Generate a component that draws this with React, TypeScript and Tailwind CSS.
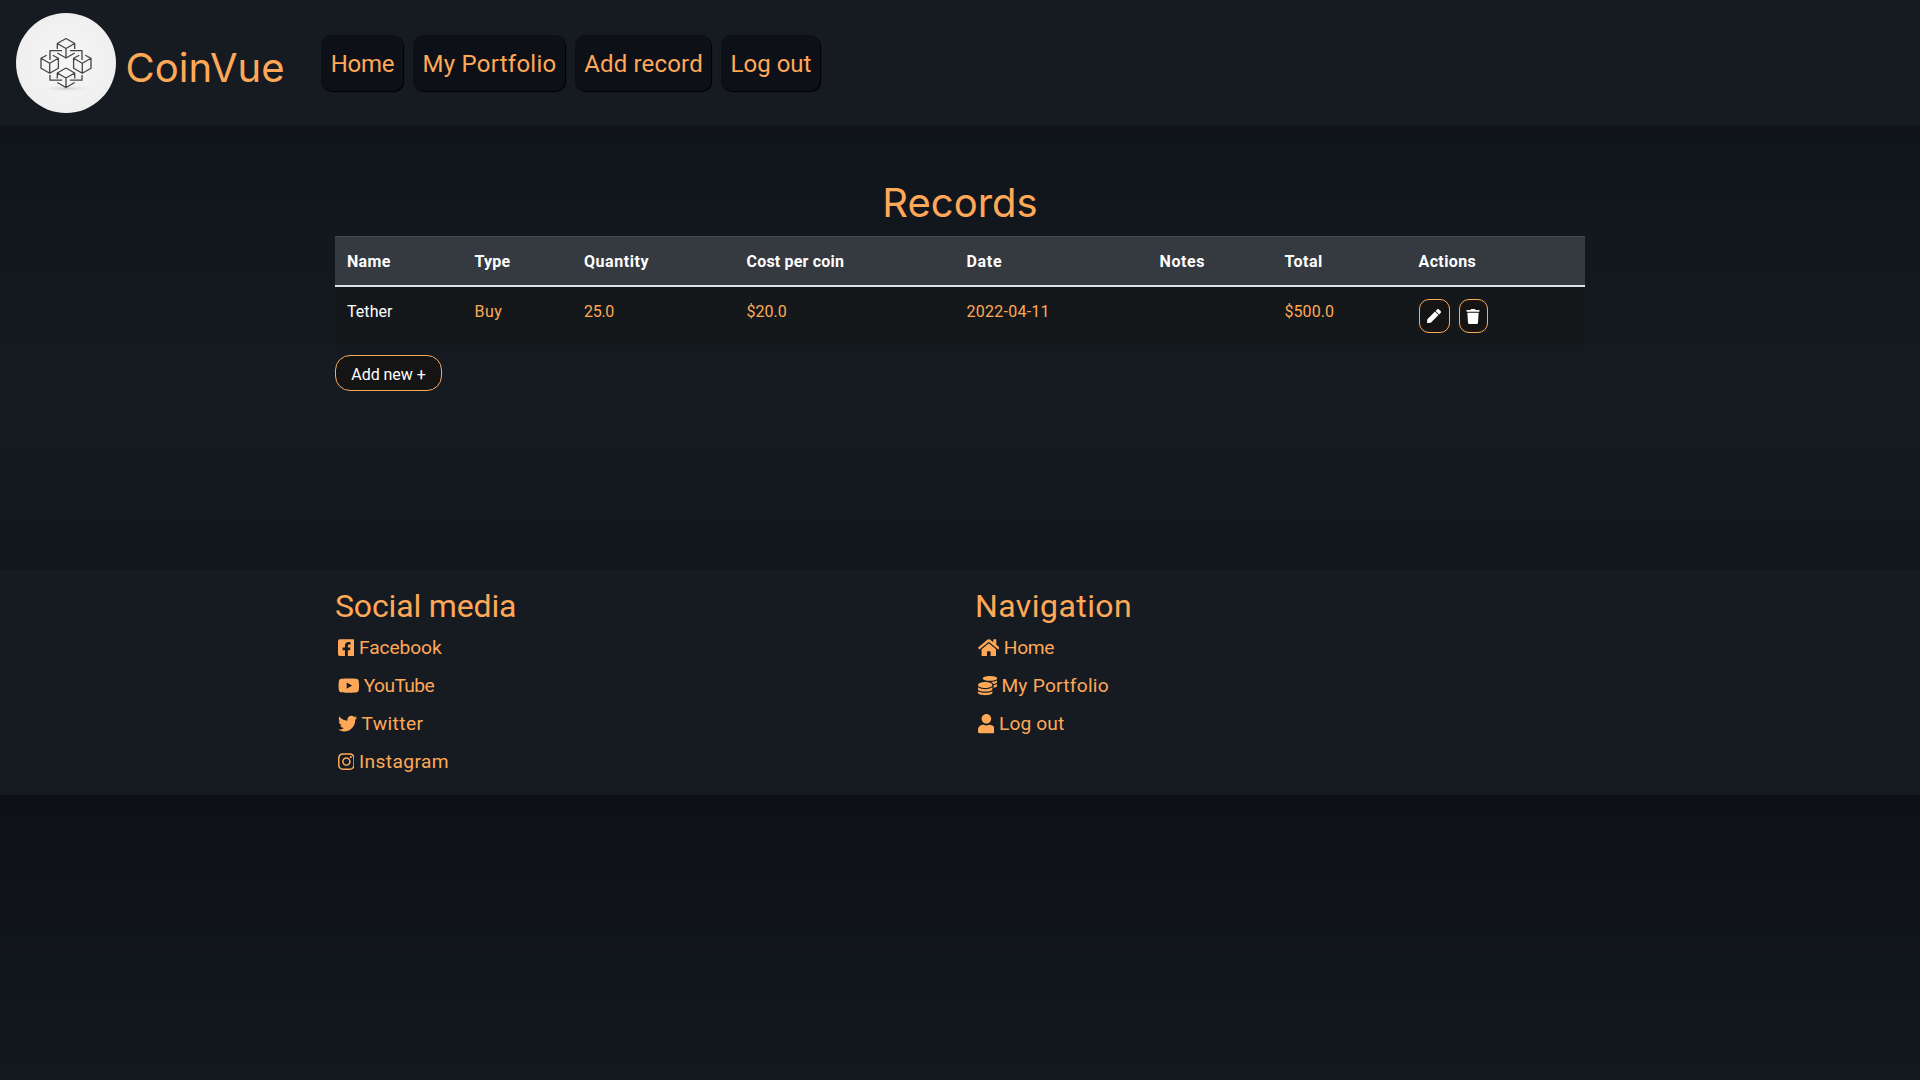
import React from 'react';
import {
  FaCoins, FaFacebookSquare, FaHome, FaInstagram, FaPen, FaTrash, FaTwitter, FaUser, FaYoutube,
} from 'react-icons/fa';

function Cube({ x, y }: { x: number; y: number }) {
  return (
    <g transform={`translate(${x} ${y})`}>
      <path d="M-3-8.300-8.700-5.200V4.800L0 9.800 8.700 4.800V-5.200L3-8.300M-8.700-5.200 0-.3 8.700-5.200M0-.3V9.800" />
    </g>
  );
}

function Logo() {
  return (
    <svg viewBox="0 0 100 100" className="size-[100px] shrink-0">
      <defs>
        <radialGradient id="disc">
          <stop offset="0" stopColor="#f7f7f7" />
          <stop offset="1" stopColor="#efefef" />
        </radialGradient>
        <radialGradient id="shadow">
          <stop offset="0" stopColor="#cfcfcf" />
          <stop offset="1" stopColor="#f3f3f3" stopOpacity="0" />
        </radialGradient>
      </defs>
      <circle cx="50" cy="50" r="50" fill="url(#disc)" />
      <ellipse cx="50" cy="75.500" rx="30" ry="3.500" fill="url(#shadow)" />
      <g fill="none" stroke="#444" strokeWidth="1.300" strokeLinejoin="round">
        <path d="M50 25.500 58.700 30.500V36M50 25.500 41.300 30.500V36M41.300 30.500 50 35.500 58.700 30.500M50 35.500V45M41.300 40 50 45 58.700 40" />
        <Cube x={33.700} y={50.500} />
        <Cube x={66.300} y={50.500} />
        <path d="M50 55 58.700 60V65.500M50 55 41.300 60V65.500M41.300 60 50 65 58.700 60M50 65V74.500M41.300 69.500 50 74.500 58.700 69.500" />
        <path d="M34 47V37.700H46M54 37.700H66V47M34 62V67.200H46M54 67.200H66V62" />
      </g>
    </svg>
  );
}

const nav = [
  { label: 'Home', box: 'w-[82px]', text: 'tracking-[-0.3px]' },
  { label: 'My Portfolio', box: 'w-[152px]', text: 'tracking-[0.25px]' },
  { label: 'Add record', box: 'w-[136px]', text: 'tracking-[0.17px]' },
  { label: 'Log out', box: 'w-[99px]', text: 'tracking-normal' },
];

const columns = [
  { head: 'Name', value: 'Tether', width: 'w-[127.500px]', h: 'tracking-[0.33px]', v: 'text-white tracking-[0.05px]' },
  { head: 'Type', value: 'Buy', width: 'w-[109.500px]', h: 'tracking-[0.22px]', v: 'tracking-[0.46px]' },
  { head: 'Quantity', value: '25.0', width: 'w-[162.500px]', h: 'tracking-[0.56px]', v: 'tracking-[-0.3px]' },
  { head: 'Cost per coin', value: '$20.0', width: 'w-[220px]', h: 'tracking-[0.19px]', v: 'tracking-normal' },
  { head: 'Date', value: '2022-04-11', width: 'w-[193px]', h: 'tracking-[0.700px]', v: 'tracking-[0.25px]' },
  { head: 'Notes', value: '', width: 'w-[125px]', h: 'tracking-[0.600px]', v: '' },
  { head: 'Total', value: '$500.0', width: 'w-[134px]', h: 'tracking-[0.500px]', v: 'tracking-[0.06px]' },
];

const social = [
  { label: 'Facebook', Icon: FaFacebookSquare, size: 'w-[16.800px]', text: 'tracking-[-0.1px]' },
  { label: 'YouTube', Icon: FaYoutube, size: 'w-[21.600px]', text: 'tracking-[-0.6px]' },
  { label: 'Twitter', Icon: FaTwitter, size: 'w-[19.200px]', text: 'tracking-[0.4px]' },
  { label: 'Instagram', Icon: FaInstagram, size: 'w-[16.800px]', text: 'tracking-[0.38px]' },
];

const pages = [
  { label: 'Home', Icon: FaHome, size: 'w-[21.600px]', text: 'tracking-[-0.3px]' },
  { label: 'My Portfolio', Icon: FaCoins, size: 'w-[19.200px]', text: 'tracking-[0.24px]' },
  { label: 'Log out', Icon: FaUser, size: 'w-[16.800px]', text: 'tracking-[0.1px]' },
];

function LinkList({ items }: { items: typeof social }) {
  return (
    <ul>
      {items.map(({ label, Icon, size, text }) => (
        <li key={label} className="flex h-[38px] items-center gap-[4.500px] pl-[2.700px] text-[19.200px]">
          <Icon className={`h-[19.200px] shrink-0 ${size}`} />
          <span className={`pt-px ${text}`}>{label}</span>
        </li>
      ))}
    </ul>
  );
}

const pill = 'flex items-center justify-center border border-[#ffa858] bg-[#141414] text-white';

export default function App() {
  return (
    <div className="h-[1080px] overflow-hidden bg-[linear-gradient(#0d1117,#161b22,#0d1117)] bg-[length:100%_795px] font-[Roboto,sans-serif] text-[#ffa858]">
      <header className="flex h-[125px] items-start bg-[#161b22] pt-[13px] pl-4">
        <Logo />
        <div className="ml-[9.500px] w-[195.500px] pt-[31px] font-[Inter,sans-serif] text-[40px] leading-[48px]">CoinVue</div>
        <nav className="flex gap-[10px] pt-[22px]">
          {nav.map((n) => (
            <a key={n.label} className={`flex h-14 items-center justify-center rounded-[10px] bg-[#0d1117] pt-0.5 pl-px text-2xl shadow-[1px_1px_1px_#000] ${n.box} ${n.text}`}>
              {n.label}
            </a>
          ))}
        </nav>
      </header>

      <main className="mx-auto h-[445px] w-[1250px] pt-[54px]">
        <h1 className="h-[57px] text-center font-[Inter,sans-serif] text-[40px] leading-[48px]">Records</h1>
        <div className="flex h-[51px] items-center border-t border-b-2 border-t-[#454d55] border-b-[#dee2e6] bg-[#343a40] pt-0.5 font-bold text-white">
          {columns.map((c) => <div key={c.head} className={`pl-3 ${c.width} ${c.h}`}>{c.head}</div>)}
          <div className="pl-3 tracking-[0.38px]">Actions</div>
        </div>
        <div className="flex h-[58px] items-start bg-[#141614]/40 pt-3">
          {columns.map((c) => <div key={c.head} className={`pt-px pl-3 ${c.width} ${c.v}`}>{c.value}</div>)}
          <div className="flex gap-[9px] pl-3">
            <button className={`h-[34px] w-[31px] rounded-[10px] ${pill}`}><FaPen className="size-[14px]" /></button>
            <button className={`h-[34px] w-[29px] rounded-[10px] ${pill}`}><FaTrash className="h-[15px] w-[14px]" /></button>
          </div>
        </div>
        <button className={`mt-[10px] h-9 w-[107px] rounded-[15px] pt-1 tracking-[-0.05px] ${pill}`}>Add new +</button>
      </main>

      <footer className="h-[225px] bg-[#161b22]">
        <div className="mx-auto grid w-[1280px] grid-cols-2 pt-4">
          <section className="pl-[15px]">
            <h2 className="h-[43px] text-[32px] leading-10 tracking-[-0.16px]">Social media</h2>
            <LinkList items={social} />
          </section>
          <section className="pl-[15px]">
            <h2 className="h-[43px] text-[32px] leading-10 tracking-[0.43px]">Navigation</h2>
            <LinkList items={pages} />
          </section>
        </div>
      </footer>
    </div>
  );
}
